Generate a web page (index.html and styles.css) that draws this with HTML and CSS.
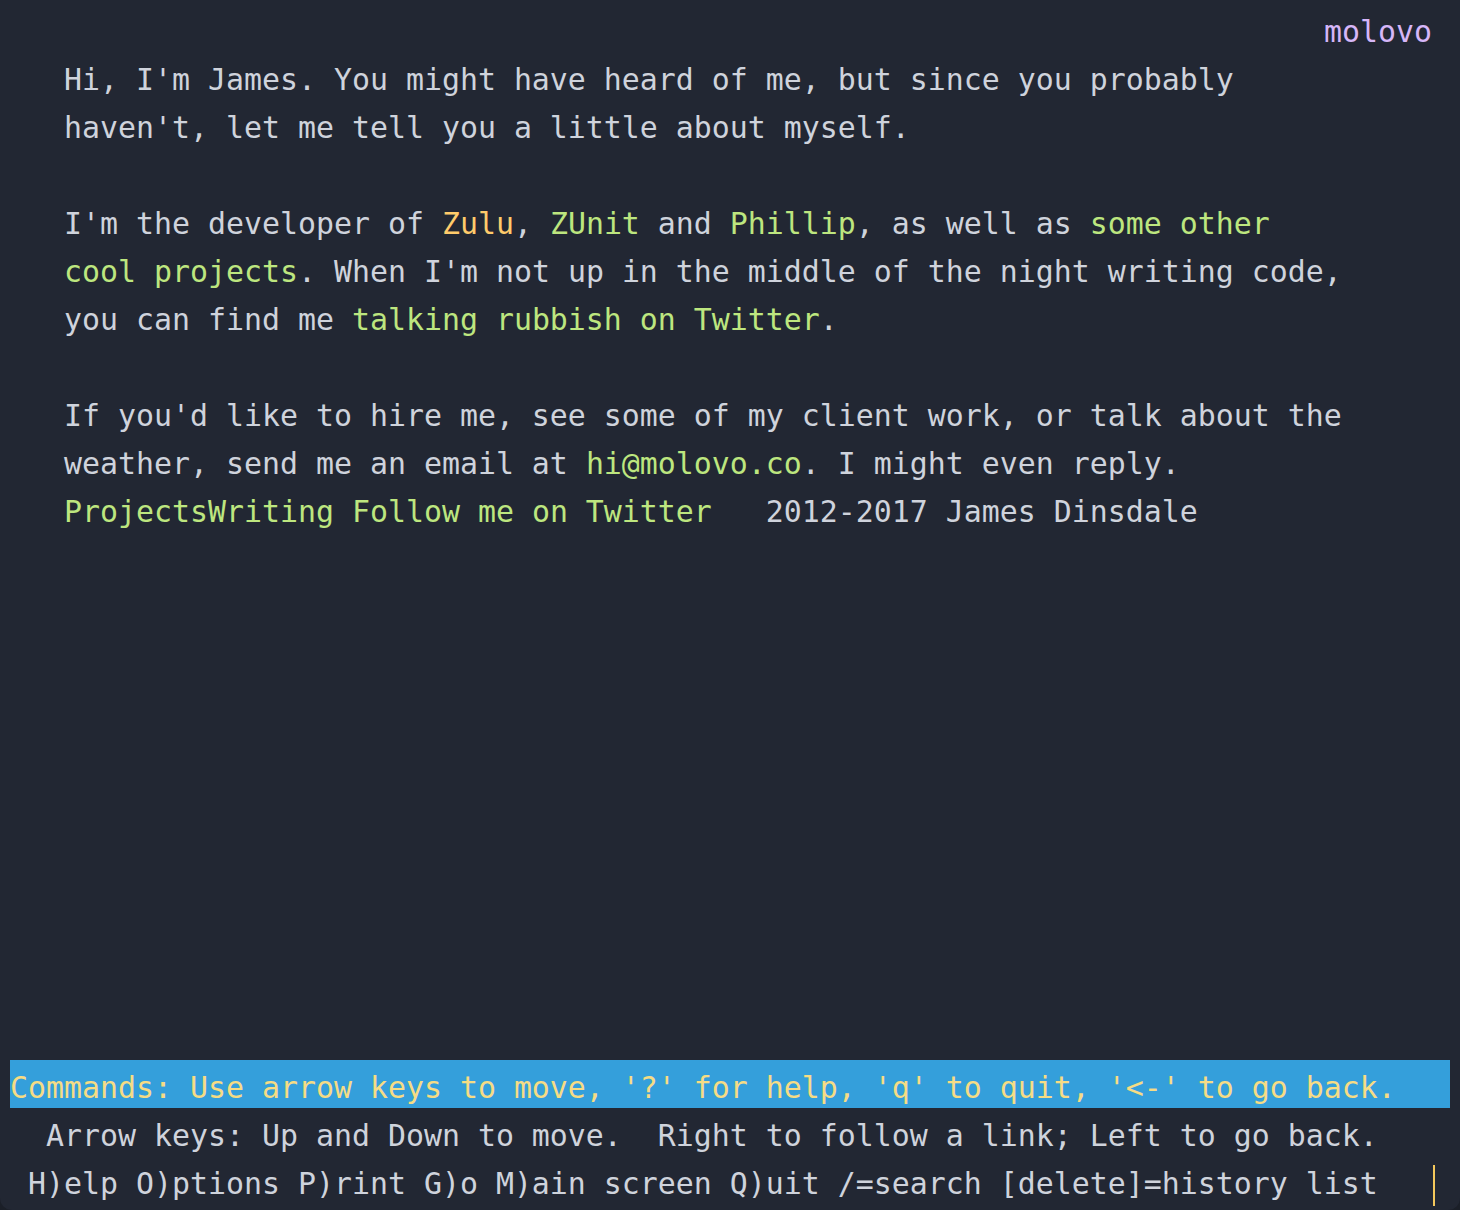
FILE: index.html
```html
<!DOCTYPE html>
<html>
<head>
<meta charset="utf-8">
<link rel="stylesheet" href="styles.css">
</head>
<body>
<div class="term">
<div class="row title">molovo</div>
<div class="screen">
<div class="row">   Hi, I'm James. You might have heard of me, but since you probably</div>
<div class="row">   haven't, let me tell you a little about myself.</div>
<div class="row"></div>
<div class="row">   I'm the developer of <span class="y">Zulu</span>, <span class="g">ZUnit</span> and <span class="g">Phillip</span>, as well as <span class="g">some other</span></div>
<div class="row">   <span class="g">cool projects</span>. When I'm not up in the middle of the night writing code,</div>
<div class="row">   you can find me <span class="g">talking rubbish on Twitter</span>.</div>
<div class="row"></div>
<div class="row">   If you'd like to hire me, see some of my client work, or talk about the</div>
<div class="row">   weather, send me an email at <span class="g">hi@molovo.co</span>. I might even reply.</div>
<div class="row">   <span class="g">ProjectsWriting Follow me on Twitter</span>   2012-2017 James Dinsdale</div>
</div>
<div class="status">
<div class="row cmd">Commands: Use arrow keys to move, '?' for help, 'q' to quit, '&lt;-' to go back.</div>
<div class="row">  Arrow keys: Up and Down to move.  Right to follow a link; Left to go back.</div>
<div class="row"> H)elp O)ptions P)rint G)o M)ain screen Q)uit /=search [delete]=history list   <span class="cursor"></span></div>
</div>
</div>
</body>
</html>
```
FILE: styles.css
```css
html, body {
  margin: 0;
  padding: 0;
  background: #1b1f28;
}
.term {
  width: 1460px;
  height: 1210px;
  box-sizing: border-box;
  background: #222733;
  border-radius: 0 0 12px 12px;
  padding: 4px 10px 6px 10px;
  display: flex;
  flex-direction: column;
  font-family: "DejaVu Sans Mono", monospace;
  font-size: 29.9px;
  line-height: 44px;
  color: #cfd3dc;
}
.row {
  white-space: pre;
  height: 42px;
  padding-top: 6px;
}
.title {
  text-align: right;
  padding-right: 18px;
  color: #d6b6f8;
}
.screen {
  flex: 1;
}
.y { color: #ffcb6b; }
.g { color: #bde67f; }
.cmd {
  background: #349fdb;
  color: #f6dc85;
}
.cursor {
  display: inline-block;
  width: 2px;
  height: 41px;
  background: #f4c85c;
  vertical-align: -12px;
  margin-left: 1px;
}
```
